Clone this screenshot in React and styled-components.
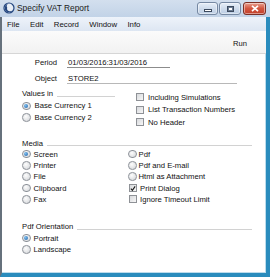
import React from 'react';
import styled, { createGlobalStyle } from 'styled-components';

const Global = createGlobalStyle`
  html, body { margin: 0; padding: 0; background: #fff; }
  body { font-family: "Liberation Sans", Arial, sans-serif; color: #111; }
  * { box-sizing: border-box; }
`;

const Window = styled.div`
  width: 270px;
  height: 277px;
  display: flex;
  flex-direction: column;
  overflow: hidden;
  background: #fff;
`;

const TitleBar = styled.div`
  height: 17px;
  flex: none;
  display: flex;
  align-items: flex-start;
  padding-left: 3px;
  background: linear-gradient(#d3dfee, #c2d3e7);
`;

const AppIcon = styled.svg`
  width: 12px;
  height: 12px;
  margin-top: 2px;
  flex: none;
`;

const Title = styled.span`
  font-size: 8.4px;
  line-height: 17px;
  margin-left: 2px;
  color: #1b1b1b;
`;

const Caption = styled.div`
  margin-left: auto;
  margin-right: 4px;
  margin-top: 2px;
  display: flex;
  gap: 1px;
`;

const CapButton = styled.div`
  width: ${p => p.$w}px;
  height: 13px;
  margin-left: ${p => p.$ml || 0}px;
  border: 1px solid ${p => (p.$close ? '#7c2f25' : '#7588a2')};
  border-radius: 3px;
  display: flex;
  align-items: center;
  justify-content: center;
  background: ${p =>
    p.$close
      ? 'linear-gradient(#e9a08f, #d2553f 50%, #c2402a)'
      : 'linear-gradient(#e6eef8, #cfdcec 50%, #bccee4)'};
  box-shadow: inset 0 0 0 1px rgba(255, 255, 255, 0.45);
`;

const MinGlyph = styled.span`
  width: 8px;
  height: 3px;
  margin-top: 4px;
  background: #fff;
  border: 1px solid #3c4a5e;
`;

const MaxGlyph = styled.span`
  width: 7px;
  height: 6px;
  background: #fff;
  border: 1px solid #3c4a5e;
  box-shadow: inset 0 0 0 1px #6b7c93;
`;

const CloseGlyph = styled.svg`
  width: 8px;
  height: 7px;
`;

const Body = styled.div`
  flex: 1;
  display: flex;
  flex-direction: column;
  border-left: 2px solid #66717c;
  border-right: 4px solid #2a8cbd;
  border-bottom: 4px solid #2a8cbd;
  box-shadow: inset -1px 0 0 #bcdcec, inset 0 -1px 0 #bcdcec;
`;

const MenuBar = styled.div`
  height: 14px;
  flex: none;
  display: flex;
  align-items: center;
  gap: 10.4px;
  padding-left: 5px;
  font-size: 7.8px;
  background: linear-gradient(#eef3fa, #dde6f2);
`;

const Toolbar = styled.div`
  height: 23px;
  flex: none;
  display: flex;
  align-items: center;
  justify-content: flex-end;
  padding: 2px 19px 0 0;
  font-size: 7.6px;
  background: linear-gradient(#fbfbfb, #f2f2f2);
  border-bottom: 1px solid #d6d6d6;
`;

const Content = styled.div`
  flex: 1;
  padding-left: 20px;
  display: flex;
  flex-direction: column;
  font-size: 7.7px;
`;

const Fields = styled.div`
  display: grid;
  grid-template-columns: 35px auto;
  grid-auto-rows: 16px;
  column-gap: 10px;
  align-items: center;
`;

const FieldLabel = styled.span`
  text-align: right;
`;

const FieldValue = styled.span`
  width: ${p => p.$w}px;
  height: 10px;
  line-height: 9px;
  margin-top: 1px;
  border-bottom: 1px solid ${p => p.$line};
  padding-left: 1px;
  white-space: nowrap;
`;

const Section = styled.div`
  margin-top: ${p => p.$mt}px;
  display: grid;
  grid-template-columns: ${p => p.$cols};
`;

const Column = styled.div`
  display: flex;
  flex-direction: column;
  padding-top: ${p => p.$pt || 0}px;
`;

const Heading = styled.div`
  width: ${p => p.$w}px;
  height: 11px;
  display: flex;
  align-items: center;
  grid-column: ${p => (p.$span ? '1 / -1' : 'auto')};
  &::after {
    content: '';
    flex: 1;
    height: 1px;
    margin: 5px 0 0 4px;
    background: #d2d2d2;
  }
`;

const Row = styled.div`
  height: ${p => p.$h}px;
  display: flex;
  align-items: center;
  gap: ${p => p.$gap}px;
  margin-left: ${p => p.$ml || 0}px;
  white-space: nowrap;
`;

const Radio = styled.span`
  width: 8.5px;
  height: 8.5px;
  flex: none;
  border-radius: 50%;
  border: 1px solid #8d9299;
  background: radial-gradient(circle at 40% 35%, #fdfdfd, #d9dbde 80%);
  display: flex;
  align-items: center;
  justify-content: center;
  &::after {
    content: '';
    display: ${p => (p.$on ? 'block' : 'none')};
    width: 4px;
    height: 4px;
    border-radius: 50%;
    background: radial-gradient(circle at 35% 35%, #7fc0f0, #1d5fa6);
  }
`;

const Box = styled.span`
  width: 8px;
  height: 8px;
  flex: none;
  border: 1px solid #8e9196;
  background: linear-gradient(135deg, #d7d9dc, #f7f7f7);
  display: flex;
  align-items: center;
  justify-content: center;
`;

const Check = () => (
  <svg width="7" height="7" viewBox="0 0 7 7">
    <path d="M1 3.6 L2.8 5.6 L6 1" fill="none" stroke="#1a1a1a" strokeWidth="1.3" />
  </svg>
);

const RadioRow = ({ on, label, h = 11.5, ml, gap = 3 }) => (
  <Row $h={h} $gap={gap} $ml={ml}>
    <Radio $on={on} />
    <span>{label}</span>
  </Row>
);

const CheckRow = ({ on, label, h = 12.5, ml, gap = 4 }) => (
  <Row $h={h} $gap={gap} $ml={ml}>
    <Box>{on && <Check />}</Box>
    <span>{label}</span>
  </Row>
);

export default function App() {
  return (
    <>
      <Global />
      <Window>
        <TitleBar>
          <AppIcon viewBox="0 0 12 12">
            <circle cx="6" cy="6" r="5.6" fill="#24467f" />
            <circle cx="6" cy="6" r="4.4" fill="#e8eef6" />
            <path d="M6 1.8 A4.2 4.2 0 1 0 10.1 7 A3 3 0 0 1 4.2 5.4 A2.2 2.2 0 0 1 6 1.8 Z" fill="#24467f" />
          </AppIcon>
          <Title>Specify VAT Report</Title>
          <Caption>
            <CapButton $w={21}>
              <MinGlyph />
            </CapButton>
            <CapButton $w={22}>
              <MaxGlyph />
            </CapButton>
            <CapButton $w={23} $ml={1} $close>
              <CloseGlyph viewBox="0 0 8 7">
                <path d="M1 0.8 L7 6.2 M7 0.8 L1 6.2" stroke="#fff" strokeWidth="1.7" />
              </CloseGlyph>
            </CapButton>
          </Caption>
        </TitleBar>
        <Body>
          <MenuBar>
            <span>File</span>
            <span>Edit</span>
            <span>Record</span>
            <span>Window</span>
            <span>Info</span>
          </MenuBar>
          <Toolbar>
            <span>Run</span>
          </Toolbar>
          <Content>
            <Fields>
              <FieldLabel>Period</FieldLabel>
              <FieldValue $w={103} $line="#8c8c8c">01/03/2016:31/03/2016</FieldValue>
              <FieldLabel>Object</FieldLabel>
              <FieldValue $w={170} $line="#b8b8b8">STORE2</FieldValue>
            </Fields>

            <Section $mt={2} $cols="114px 1fr">
              <Column>
                <Heading $w={93}>Values in</Heading>
                <Column $pt={1}>
                  <RadioRow on label="Base Currency 1" gap={4} />
                  <RadioRow label="Base Currency 2" gap={4} />
                </Column>
              </Column>
              <Column $pt={3}>
                <CheckRow label="Including Simulations" />
                <CheckRow label="List Transaction Numbers" />
                <CheckRow label="No Header" />
              </Column>
            </Section>

            <Section $mt={9} $cols="106px 1fr">
              <Heading $w={230} $span>Media</Heading>
              <Column>
                <RadioRow on label="Screen" h={11.3} />
                <RadioRow label="Printer" h={11.3} />
                <RadioRow label="File" h={11.3} />
                <RadioRow label="Clipboard" h={11.3} />
                <RadioRow label="Fax" h={11.3} />
              </Column>
              <Column>
                <RadioRow label="Pdf" h={11.3} gap={2} />
                <RadioRow label="Pdf and E-mail" h={11.3} gap={2} />
                <RadioRow label="Html as Attachment" h={11.3} gap={2} />
                <CheckRow on label="Print Dialog" h={11.3} ml={1} gap={3} />
                <CheckRow label="Ignore Timeout Limit" h={11.3} ml={1} gap={3} />
              </Column>
            </Section>

            <Section $mt={16.5} $cols="1fr">
              <Heading $w={230}>Pdf Orientation</Heading>
              <Column>
                <RadioRow on label="Portrait" />
                <RadioRow label="Landscape" />
              </Column>
            </Section>
          </Content>
        </Body>
      </Window>
    </>
  );
}
